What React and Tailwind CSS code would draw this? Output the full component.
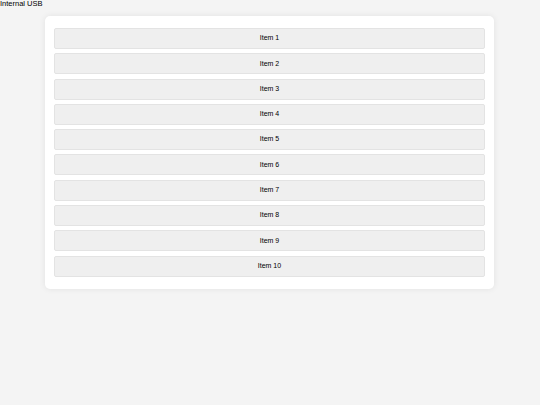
export default function App() {
  const items = Array.from({ length: 10 }, (_, i) => `Item ${i + 1}`);

  return (
    <div
      className="min-h-[405px] bg-[#f4f4f4] text-black"
      style={{ fontFamily: '"Liberation Sans", Arial, sans-serif' }}
    >
      {/* Page title */}
      <div className="text-[7.5px] leading-[8.5px]">Internal USB</div>

      {/* List card */}
      <div className="mx-[45px] mt-[7px] w-[449px] rounded-[5px] bg-white px-[9px] pt-[12.5px] pb-[12.5px] shadow-[0_0_6px_rgba(0,0,0,0.08)]">
        <div className="flex flex-col gap-[4.3px]">
          {items.map((item) => (
            <div
              key={item}
              className="flex h-[21px] items-center justify-center rounded-[2px] border border-[#e3e3e3] bg-[#efefef] text-[7px]"
            >
              {item}
            </div>
          ))}
        </div>
      </div>
    </div>
  );
}
